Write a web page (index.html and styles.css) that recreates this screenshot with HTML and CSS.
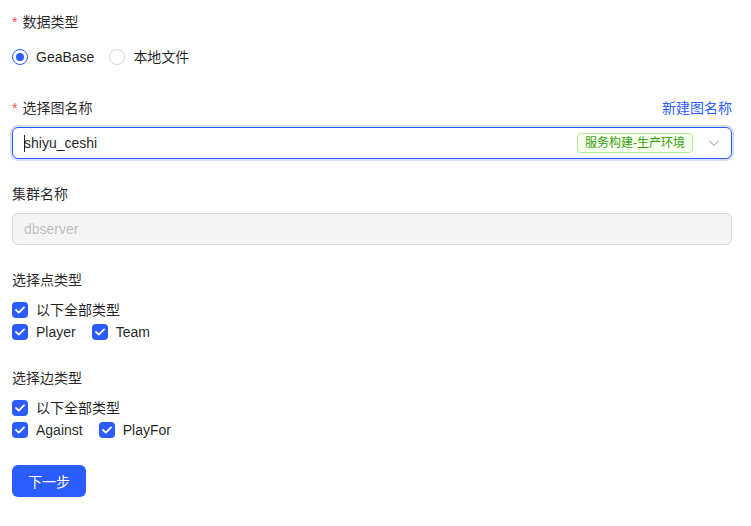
FILE: index.html
```html
<!DOCTYPE html>
<html lang="zh">
<head>
<meta charset="utf-8">
<link rel="stylesheet" href="styles.css">
</head>
<body>
<form class="form">
  <div class="item">
    <div class="label"><span class="req">*</span>数据类型</div>
    <div class="control radios">
      <label class="radio"><span class="dot checked"></span><span>GeaBase</span></label>
      <label class="radio"><span class="dot"></span><span>本地文件</span></label>
    </div>
  </div>

  <div class="item">
    <div class="label row"><span><span class="req">*</span>选择图名称</span><a class="link">新建图名称</a></div>
    <div class="select focus">
      <span class="value"><span class="caret"></span>shiyu_ceshi</span>
      <span class="tag">服务构建-生产环境</span>
      <svg class="arrow" width="12" height="12" viewBox="0 0 12 12"><path d="M1.5 4 L6 8.5 L10.5 4" fill="none" stroke="#bfbfbf" stroke-width="1.1"/></svg>
    </div>
  </div>

  <div class="item">
    <div class="label">集群名称</div>
    <div class="input disabled">dbserver</div>
  </div>

  <div class="item">
    <div class="label">选择点类型</div>
    <div class="checks">
      <div class="crow"><label class="check"><span class="box"><svg width="10" height="8" viewBox="0 0 10 8"><path d="M1 4 L3.8 6.6 L9 1.4" fill="none" stroke="#fff" stroke-width="1.8" stroke-linecap="round" stroke-linejoin="round"/></svg></span><span>以下全部类型</span></label></div>
      <div class="crow">
        <label class="check"><span class="box"><svg width="10" height="8" viewBox="0 0 10 8"><path d="M1 4 L3.8 6.6 L9 1.4" fill="none" stroke="#fff" stroke-width="1.8" stroke-linecap="round" stroke-linejoin="round"/></svg></span><span>Player</span></label>
        <label class="check"><span class="box"><svg width="10" height="8" viewBox="0 0 10 8"><path d="M1 4 L3.8 6.6 L9 1.4" fill="none" stroke="#fff" stroke-width="1.8" stroke-linecap="round" stroke-linejoin="round"/></svg></span><span>Team</span></label>
      </div>
    </div>
  </div>

  <div class="item">
    <div class="label">选择边类型</div>
    <div class="checks">
      <div class="crow"><label class="check"><span class="box"><svg width="10" height="8" viewBox="0 0 10 8"><path d="M1 4 L3.8 6.6 L9 1.4" fill="none" stroke="#fff" stroke-width="1.8" stroke-linecap="round" stroke-linejoin="round"/></svg></span><span>以下全部类型</span></label></div>
      <div class="crow">
        <label class="check"><span class="box"><svg width="10" height="8" viewBox="0 0 10 8"><path d="M1 4 L3.8 6.6 L9 1.4" fill="none" stroke="#fff" stroke-width="1.8" stroke-linecap="round" stroke-linejoin="round"/></svg></span><span>Against</span></label>
        <label class="check"><span class="box"><svg width="10" height="8" viewBox="0 0 10 8"><path d="M1 4 L3.8 6.6 L9 1.4" fill="none" stroke="#fff" stroke-width="1.8" stroke-linecap="round" stroke-linejoin="round"/></svg></span><span>PlayFor</span></label>
      </div>
    </div>
  </div>

  <div class="actions">
    <button type="button" class="btn">下一步</button>
  </div>
</form>
</body>
</html>
```

FILE: styles.css
```css
* { box-sizing: border-box; }
html, body { margin: 0; background: #fff; }
body {
  font-family: "Liberation Sans", "Noto Sans CJK SC", sans-serif;
  font-size: 14px;
  line-height: 22px;
  color: rgba(0, 0, 0, 0.88);
}
.form { padding: 11px 19px 0 12px; display: flex; flex-direction: column; gap: 24px; }
.item { display: flex; flex-direction: column; gap: 8px; }
.label { height: 22px; line-height: 22px; color: rgba(0, 0, 0, 0.85); }
.label.row { display: flex; justify-content: space-between; }
.req { color: #ff4d4f; font-family: "Liberation Sans", sans-serif; margin-right: 5px; }
.link { color: #2b5cff; cursor: pointer; }
.radios { display: flex; align-items: center; height: 32px; gap: 15px; }
.radio { display: flex; align-items: center; gap: 8px; }
.dot { width: 16px; height: 16px; border-radius: 50%; border: 1px solid #d9d9d9; background: #fff; display: inline-block; position: relative; }
.dot.checked { border-color: #2b5cff; }
.dot.checked::after { content: ""; position: absolute; left: 3px; top: 3px; width: 8px; height: 8px; border-radius: 50%; background: #2b5cff; }
.select, .input {
  height: 32px;
  border: 1px solid #d9d9d9;
  border-radius: 6px;
  padding: 0 11px;
  display: flex;
  align-items: center;
}
.select.focus { border-color: #2b5cff; box-shadow: 0 0 0 2px rgba(43, 92, 255, 0.2); }
.value { flex: 1; display: flex; align-items: center; }
.caret { display: inline-block; width: 1px; height: 17px; background: #222; margin-right: -1px; }
.tag {
  font-size: 12px;
  line-height: 18px;
  height: 20px;
  padding: 0 7px;
  color: #389e0d;
  background: #f6ffed;
  border: 1px solid #b7eb8f;
  border-radius: 4px;
  margin-right: 15px;
}
.arrow { display: block; }
.input.disabled { background: #f5f5f5; color: rgba(0, 0, 0, 0.25); }
.checks { display: flex; flex-direction: column; }
.crow { display: flex; gap: 16px; height: 22px; align-items: center; }
.check { display: flex; align-items: center; gap: 8px; }
.box { width: 16px; height: 16px; border-radius: 4px; background: #2b5cff; display: flex; align-items: center; justify-content: center; }
.actions { display: flex; }
.btn {
  font-family: "Liberation Sans", "Noto Sans CJK SC", sans-serif;
  font-size: 14px;
  height: 32px;
  width: 74px;
  border: none;
  border-radius: 6px;
  background: #2b5cff;
  color: #fff;
  cursor: pointer;
}
```
